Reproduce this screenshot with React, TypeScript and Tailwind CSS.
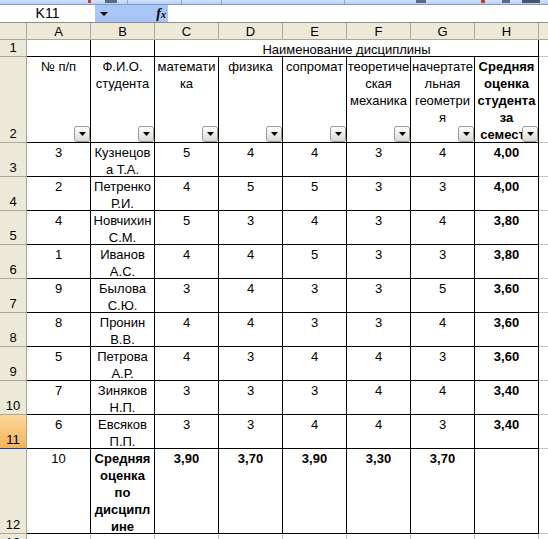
import React from "react";

const COLS = ["A", "B", "C", "D", "E", "F", "G", "H"];

type Row = {
  n: number;
  no: string;
  name: string[];
  marks: string[];
  avg: string;
};

const ROWS: Row[] = [
  { n: 3, no: "3", name: ["Кузнецов", "а Т.А."], marks: ["5", "4", "4", "3", "4"], avg: "4,00" },
  { n: 4, no: "2", name: ["Петренко", "Р.И."], marks: ["4", "5", "5", "3", "3"], avg: "4,00" },
  { n: 5, no: "4", name: ["Новчихин", "С.М."], marks: ["5", "3", "4", "3", "4"], avg: "3,80" },
  { n: 6, no: "1", name: ["Иванов", "А.С."], marks: ["4", "4", "5", "3", "3"], avg: "3,80" },
  { n: 7, no: "9", name: ["Былова", "С.Ю."], marks: ["3", "4", "3", "3", "5"], avg: "3,60" },
  { n: 8, no: "8", name: ["Пронин", "В.В."], marks: ["4", "4", "3", "3", "4"], avg: "3,60" },
  { n: 9, no: "5", name: ["Петрова", "А.Р."], marks: ["4", "3", "4", "4", "3"], avg: "3,60" },
  { n: 10, no: "7", name: ["Зиняков", "Н.П."], marks: ["3", "3", "3", "4", "4"], avg: "3,40" },
  { n: 11, no: "6", name: ["Евсяков", "П.П."], marks: ["3", "3", "4", "4", "3"], avg: "3,40" },
];

const HEADERS: { lines: string[]; bold?: boolean }[] = [
  { lines: ["№ п/п"] },
  { lines: ["Ф.И.О.", "студента"] },
  { lines: ["математи", "ка"] },
  { lines: ["физика"] },
  { lines: ["сопромат"] },
  { lines: ["теоретиче", "ская", "механика"] },
  { lines: ["начертате", "льная", "геометри", "я"] },
  { lines: ["Средняя", "оценка", "студента", "за", "семестр"], bold: true },
];

function Lines({ lines }: { lines: string[] }) {
  return (
    <>
      {lines.map((l, i) => (
        <div key={i} className="whitespace-nowrap">
          {l}
        </div>
      ))}
    </>
  );
}

function FilterButton() {
  return (
    <div className="absolute bottom-0 right-0 flex h-4 w-4 items-center justify-center rounded-[3px] border border-[#9a9a9a] bg-gradient-to-b from-[#ffffff] to-[#dcdcd4]">
      <svg width="7" height="4" viewBox="0 0 7 4">
        <path d="M0 0h7L3.5 4z" fill="#000" />
      </svg>
    </div>
  );
}

function Cell({
  children,
  bold,
  className = "",
}: {
  children?: React.ReactNode;
  bold?: boolean;
  className?: string;
}) {
  return (
    <div
      className={`relative overflow-hidden border-b border-r border-black pt-px text-center ${
        bold ? "font-bold" : ""
      } ${className}`}
    >
      {children}
    </div>
  );
}

function Blank() {
  return <div className="border-b border-[#c0c0c0]" />;
}

function RowHead({ n, active }: { n: number; active?: boolean }) {
  return (
    <div
      className={`flex items-end justify-center border-b border-r border-[#aca899] ${
        active
          ? "bg-gradient-to-b from-[#fbd79a] to-[#f3b458] border-b-[#1f3c8c]"
          : "bg-[#ece9d8]"
      }`}
    >
      {n}
    </div>
  );
}

export default function App() {
  return (
    <div
      className="h-[539px] w-[548px] overflow-hidden bg-white text-[13px] leading-[17px] text-black"
      style={{ fontFamily: '"Liberation Sans", Arial, sans-serif' }}
    >
      {/* toolbar edge */}
      <div className="flex h-[5px] items-start border-b border-[#7b9ddc] bg-gradient-to-b from-[#d3e2fa] to-[#b9cff4]">
        <span className="ml-[88px] h-[3px] w-[3px] bg-[#c0402a]" />
        <span className="ml-[14px] h-[3px] w-[12px] bg-[#5d6b80]" />
        <span className="ml-[10px] h-[4px] w-px bg-[#8aa6d8]" />
        <span className="ml-[53px] h-[4px] w-px bg-[#8aa6d8]" />
        <span className="ml-[39px] h-[4px] w-px bg-[#8aa6d8]" />
        <span className="ml-[122px] h-[4px] w-px bg-[#8aa6d8]" />
        <span className="ml-[71px] h-[3px] w-[10px] bg-[#5d6b80]" />
        <span className="ml-[55px] h-[3px] w-[4px] bg-[#c0402a]" />
        <span className="ml-[17px] h-[3px] w-[8px] bg-[#5d6b80]" />
        <span className="ml-[12px] h-[3px] w-[18px] bg-[#4a5566]" />
      </div>

      {/* formula bar */}
      <div className="flex h-[17px]">
        <div className="flex w-[95px] items-center justify-center bg-white text-[14px]">K11</div>
        <div className="flex w-[73px] items-center bg-[#a9c5f5] pl-[5px] pr-[2px]">
          <svg width="8" height="4" viewBox="0 0 8 4">
            <path d="M0 0h8L4 4z" fill="#000" />
          </svg>
          <span
            className="ml-auto text-[14px] font-bold italic leading-none text-black"
            style={{ fontFamily: '"Liberation Serif", serif' }}
          >
            f<span className="text-[10px]">x</span>
          </span>
        </div>
        <div className="flex-1 bg-white" />
      </div>
      <div className="h-px bg-[#8c8c8c]" />

      {/* sheet */}
      <div className="grid grid-cols-[27px_repeat(8,64px)_1fr] grid-rows-[17px_17px_86px_repeat(9,34px)_85px_17px]">
        {/* column headings */}
        <div className="border-b border-r border-[#aca899] bg-[#ece9d8]" />
        {COLS.map((c) => (
          <div
            key={c}
            className="flex items-center justify-center border-b border-r border-[#aca899] bg-[#ece9d8]"
          >
            {c}
          </div>
        ))}
        <div className="border-b border-[#aca899] bg-[#ece9d8]" />

        {/* row 1 */}
        <RowHead n={1} />
        <Cell />
        <Cell />
        <Cell className="col-span-6">Наименование дисциплины</Cell>
        <Blank />

        {/* row 2 */}
        <RowHead n={2} />
        {HEADERS.map((h, i) => (
          <Cell key={i} bold={h.bold}>
            <Lines lines={h.lines} />
            <FilterButton />
          </Cell>
        ))}
        <Blank />

        {/* rows 3-11 */}
        {ROWS.map((r) => (
          <React.Fragment key={r.n}>
            <RowHead n={r.n} active={r.n === 11} />
            <Cell>{r.no}</Cell>
            <Cell>
              <Lines lines={r.name} />
            </Cell>
            {r.marks.map((m, i) => (
              <Cell key={i}>{m}</Cell>
            ))}
            <Cell bold>{r.avg}</Cell>
            <Blank />
          </React.Fragment>
        ))}

        {/* row 12 */}
        <RowHead n={12} />
        <Cell>10</Cell>
        <Cell bold>
          <Lines lines={["Средняя", "оценка", "по", "дисципл", "ине"]} />
        </Cell>
        {["3,90", "3,70", "3,90", "3,30", "3,70"].map((v, i) => (
          <Cell key={i} bold>
            {v}
          </Cell>
        ))}
        <Cell />
        <Blank />

        {/* row 13 */}
        <div className="flex items-end justify-center border-r border-[#aca899] bg-[#ece9d8]">13</div>
        {COLS.map((c) => (
          <div key={c} className="border-r border-[#c0c0c0]" />
        ))}
        <div />
      </div>
    </div>
  );
}
